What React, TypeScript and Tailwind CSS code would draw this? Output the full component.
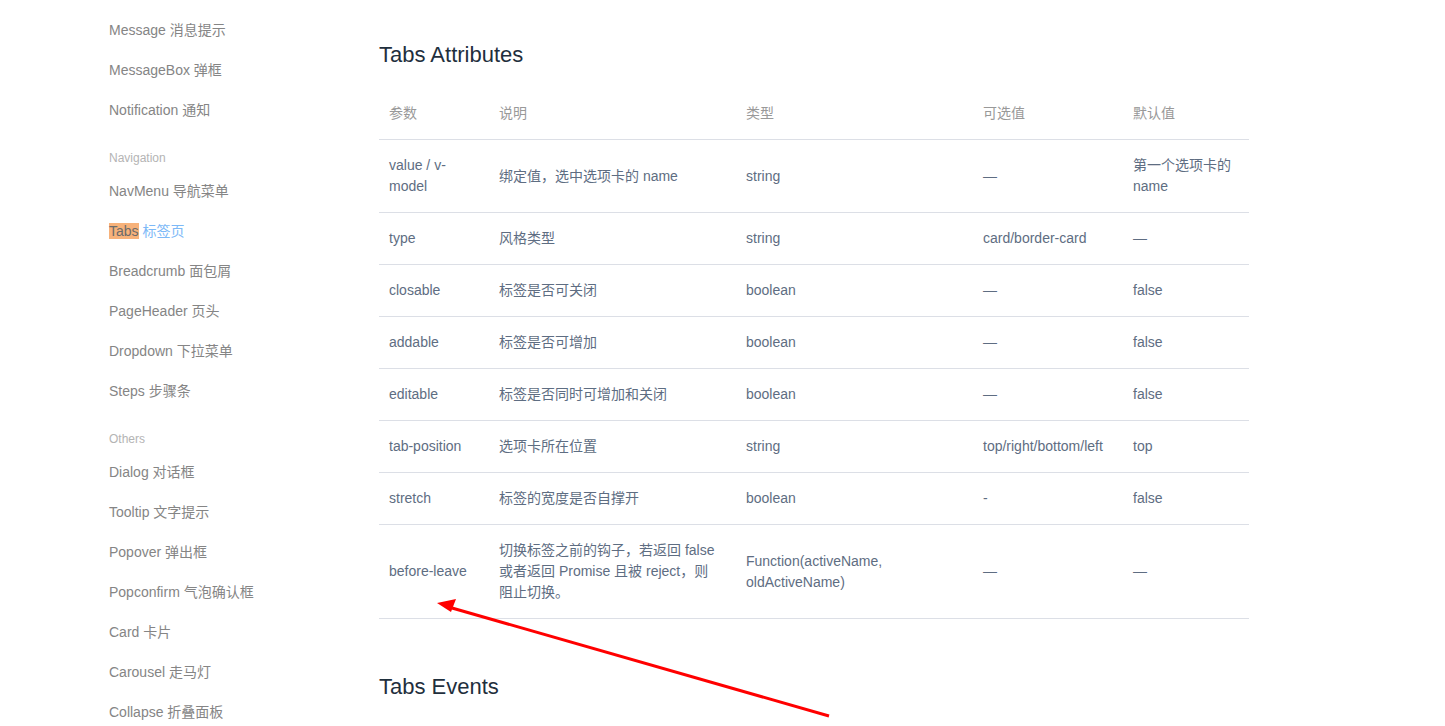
import React from "react";

type NavEntry = { label?: string; group?: string; active?: boolean };

const nav: NavEntry[] = [
    { label: "Message 消息提示" },
    { label: "MessageBox 弹框" },
    { label: "Notification 通知" },
    { group: "Navigation" },
    { label: "NavMenu 导航菜单" },
    { label: "Tabs 标签页", active: true },
    { label: "Breadcrumb 面包屑" },
    { label: "PageHeader 页头" },
    { label: "Dropdown 下拉菜单" },
    { label: "Steps 步骤条" },
    { group: "Others" },
    { label: "Dialog 对话框" },
    { label: "Tooltip 文字提示" },
    { label: "Popover 弹出框" },
    { label: "Popconfirm 气泡确认框" },
    { label: "Card 卡片" },
    { label: "Carousel 走马灯" },
    { label: "Collapse 折叠面板" },
];

const rows: React.ReactNode[][] = [
    ["value / v-model", "绑定值，选中选项卡的 name", "string", "—", "第一个选项卡的 name"],
    ["type", "风格类型", "string", "card/border-card", "—"],
    ["closable", "标签是否可关闭", "boolean", "—", "false"],
    ["addable", "标签是否可增加", "boolean", "—", "false"],
    ["editable", "标签是否同时可增加和关闭", "boolean", "—", "false"],
    ["tab-position", "选项卡所在位置", "string", "top/right/bottom/left", "top"],
    ["stretch", "标签的宽度是否自撑开", "boolean", "-", "false"],
    [
        "before-leave",
        <>切换标签之前的钩子，若返回 false<br />或者返回 Promise 且被 reject，则<br />阻止切换。</>,
        "Function(activeName, oldActiveName)",
        "—",
        "—",
    ],
];

const colWidths = ["w-[110px]", "w-[247px]", "w-[237px]", "w-[150px]", "w-[126px]"];
const headers = ["参数", "说明", "类型", "可选值", "默认值"];

function Sidebar() {
    return (
        <aside className="w-[379px] shrink-0 pl-[109px] pt-[10px]">
            {nav.map((item, i) =>
                item.group ? (
                    <div key={i} className="mt-[15px] text-[12px] leading-[26px] text-[#b4b4b4]">
                        {item.group}
                    </div>
                ) : item.active ? (
                    <div key={i} className="h-[40px] text-[14px] leading-[40px] text-[#7db9f7]">
                        <span className="bg-[#f7b27a] text-[#6b6b6b]">Tabs</span> 标签页
                    </div>
                ) : (
                    <div key={i} className="h-[40px] text-[14px] leading-[40px] text-[#858585]">
                        {item.label}
                    </div>
                )
            )}
        </aside>
    );
}

export default function App() {
    return (
        <div className="relative h-[726px] w-[1445px] overflow-hidden bg-white font-['Liberation_Sans','Noto_Sans_CJK_SC',sans-serif]">
            <div className="flex">
                <Sidebar />
                <main className="w-[870px] pt-[38px]">
                    <h3 className="mb-[17px] text-[22px] leading-[33px] text-[#1f2f3d]">Tabs Attributes</h3>
                    <table className="w-[870px] table-fixed border-collapse text-[14px] leading-[21px]">
                        <thead>
                            <tr className="border-b border-[#dcdfe6]">
                                {headers.map((h, i) => (
                                    <th key={h} className={`${colWidths[i]} px-[10px] py-[15px] text-left font-normal text-[#999]`}>
                                        {h}
                                    </th>
                                ))}
                            </tr>
                        </thead>
                        <tbody>
                            {rows.map((r, ri) => (
                                <tr key={ri} className="border-b border-[#dcdfe6]">
                                    {r.map((c, ci) => (
                                        <td key={ci} className="px-[10px] py-[15px] align-middle text-[#5e6d82]">
                                            {c}
                                        </td>
                                    ))}
                                </tr>
                            ))}
                        </tbody>
                    </table>
                    <h3 className="mt-[51px] text-[22px] leading-[33px] text-[#1f2f3d]">Tabs Events</h3>
                </main>
            </div>
            {/* annotation arrow */}
            <svg className="pointer-events-none absolute left-0 top-0" width="1445" height="726">
                <line x1="829" y1="716" x2="452" y2="608" stroke="#ff0000" strokeWidth="3" />
                <polygon points="437,603 456,599 451,612" fill="#ff0000" />
            </svg>
        </div>
    );
}
